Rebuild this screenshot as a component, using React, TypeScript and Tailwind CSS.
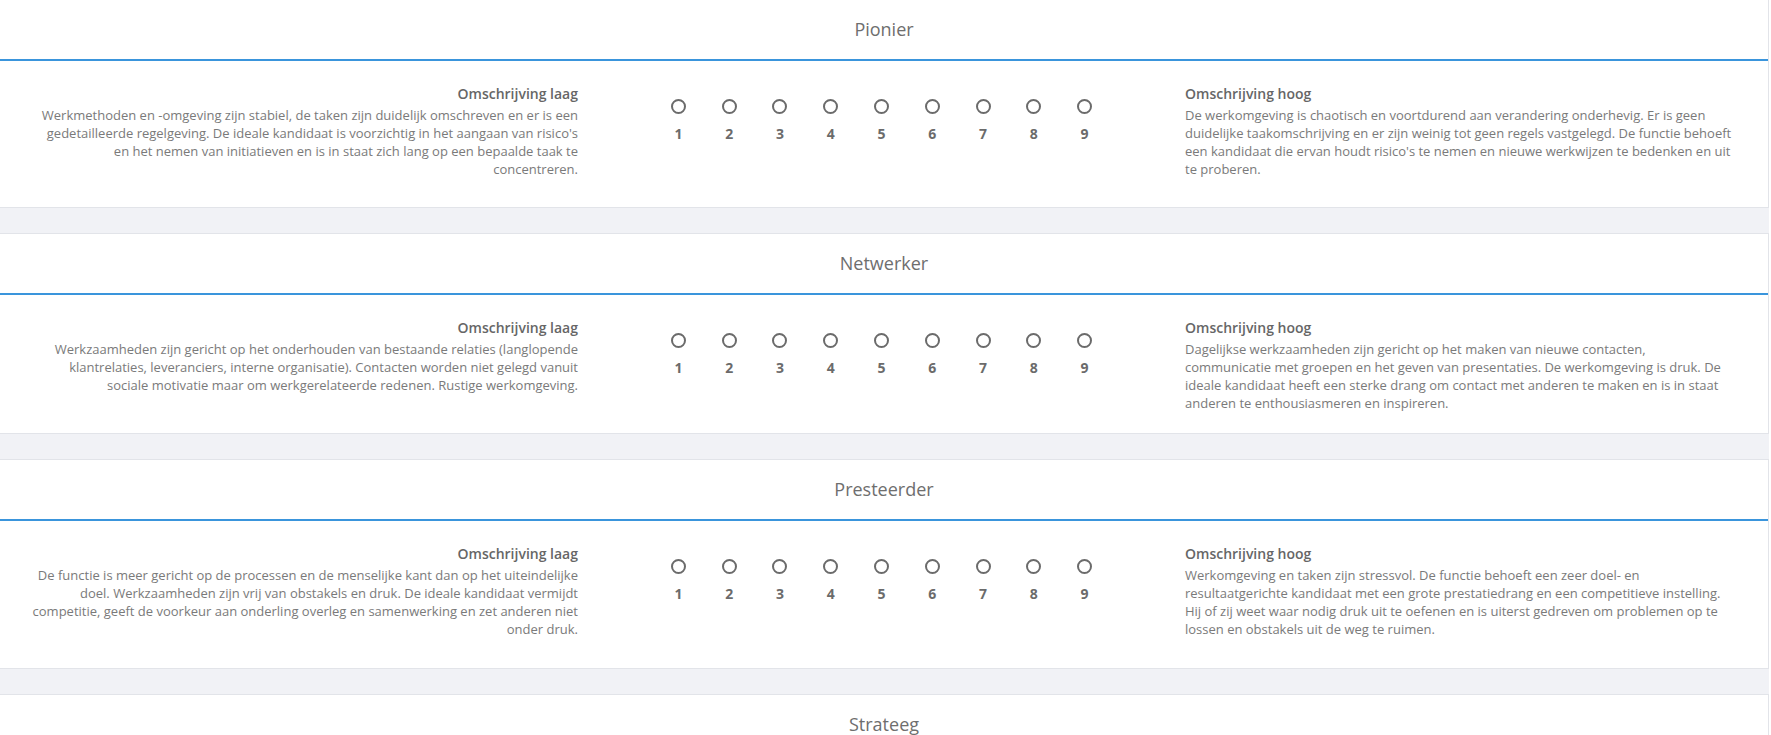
const DIMENSIONS = [
  {
    title: 'Pionier',
    low: "Werkmethoden en -omgeving zijn stabiel, de taken zijn duidelijk omschreven en er is een gedetailleerde regelgeving. De ideale kandidaat is voorzichtig in het aangaan van risico's en het nemen van initiatieven en is in staat zich lang op een bepaalde taak te concentreren.",
    high: "De werkomgeving is chaotisch en voortdurend aan verandering onderhevig. Er is geen duidelijke taakomschrijving en er zijn weinig tot geen regels vastgelegd. De functie behoeft een kandidaat die ervan houdt risico's te nemen en nieuwe werkwijzen te bedenken en uit te proberen.",
    pad: 'pb-[29px]',
    first: true,
  },
  {
    title: 'Netwerker',
    low: 'Werkzaamheden zijn gericht op het onderhouden van bestaande relaties (langlopende klantrelaties, leveranciers, interne organisatie). Contacten worden niet gelegd vanuit sociale motivatie maar om werkgerelateerde redenen. Rustige werkomgeving.',
    high: 'Dagelijkse werkzaamheden zijn gericht op het maken van nieuwe contacten,\ncommunicatie met groepen en het geven van presentaties. De werkomgeving is druk. De ideale kandidaat heeft een sterke drang om contact met anderen te maken en is in staat anderen te enthousiasmeren en inspireren.',
    pad: 'pb-[21px]',
  },
  {
    title: 'Presteerder',
    low: 'De functie is meer gericht op de processen en de menselijke kant dan op het uiteindelijke doel. Werkzaamheden zijn vrij van obstakels en druk. De ideale kandidaat vermijdt competitie, geeft de voorkeur aan onderling overleg en samenwerking en zet anderen niet onder druk.',
    high: 'Werkomgeving en taken zijn stressvol. De functie behoeft een zeer doel- en\nresultaatgerichte kandidaat met een grote prestatiedrang en een competitieve instelling. Hij of zij weet waar nodig druk uit te oefenen en is uiterst gedreven om problemen op te lossen en obstakels uit de weg te ruimen.',
    pad: 'pb-[30px]',
  },
]

const SCALE = [1, 2, 3, 4, 5, 6, 7, 8, 9]

function Scale({ name }: { name: string }) {
  return (
    <div className="grid w-[457px] grid-cols-9">
      {SCALE.map((n) => (
        <label key={n} className="flex flex-col items-center">
          <input type="radio" name={name} className="sr-only" />
          <span className="h-[15px] w-[15px] rounded-full border-2 border-[#6b6b6b] bg-white" />
          <span className="mt-[11px] text-[14px] font-bold leading-[18px] text-[#6b6b6b]">{n}</span>
        </label>
      ))}
    </div>
  )
}

function Header({ title }: { title: string }) {
  return (
    <div className="flex h-[61px] items-center justify-center border-b-2 border-[#3a95dc] text-[18px] text-[#6e6e6e]">
      {title}
    </div>
  )
}

export default function App() {
  return (
    <div className="min-h-screen w-full bg-white font-['Open_Sans',sans-serif]">
      <div className="flex w-[1769px] flex-col gap-[25px] bg-[#f1f2f6]">
        {DIMENSIONS.map((d) => (
          <section
            key={d.title}
            className={`border-y border-r border-[#e2e4e9] bg-white ${d.first ? '-mt-px' : ''}`}
          >
            <Header title={d.title} />
            <div className={`flex pt-[23px] ${d.pad}`}>
              <div className="w-[578px] shrink-0 pl-[30px] text-right">
                <p className="text-[14px] font-semibold leading-[20px] text-[#666]">Omschrijving laag</p>
                <p className="mt-[2px] text-[13px] leading-[18px] text-[#7a7a7a]">{d.low}</p>
              </div>
              <div className="flex flex-1 justify-center pt-[15px]">
                <Scale name={d.title} />
              </div>
              <div className="w-[583px] shrink-0 pr-[33px]">
                <p className="text-[14px] font-semibold leading-[20px] text-[#666]">Omschrijving hoog</p>
                <p className="mt-[2px] whitespace-pre-line text-[13px] leading-[18px] text-[#7a7a7a]">{d.high}</p>
              </div>
            </div>
          </section>
        ))}
        <section className="h-[200px] border-y border-r border-[#e2e4e9] bg-white">
          <Header title="Strateeg" />
        </section>
      </div>
    </div>
  )
}
